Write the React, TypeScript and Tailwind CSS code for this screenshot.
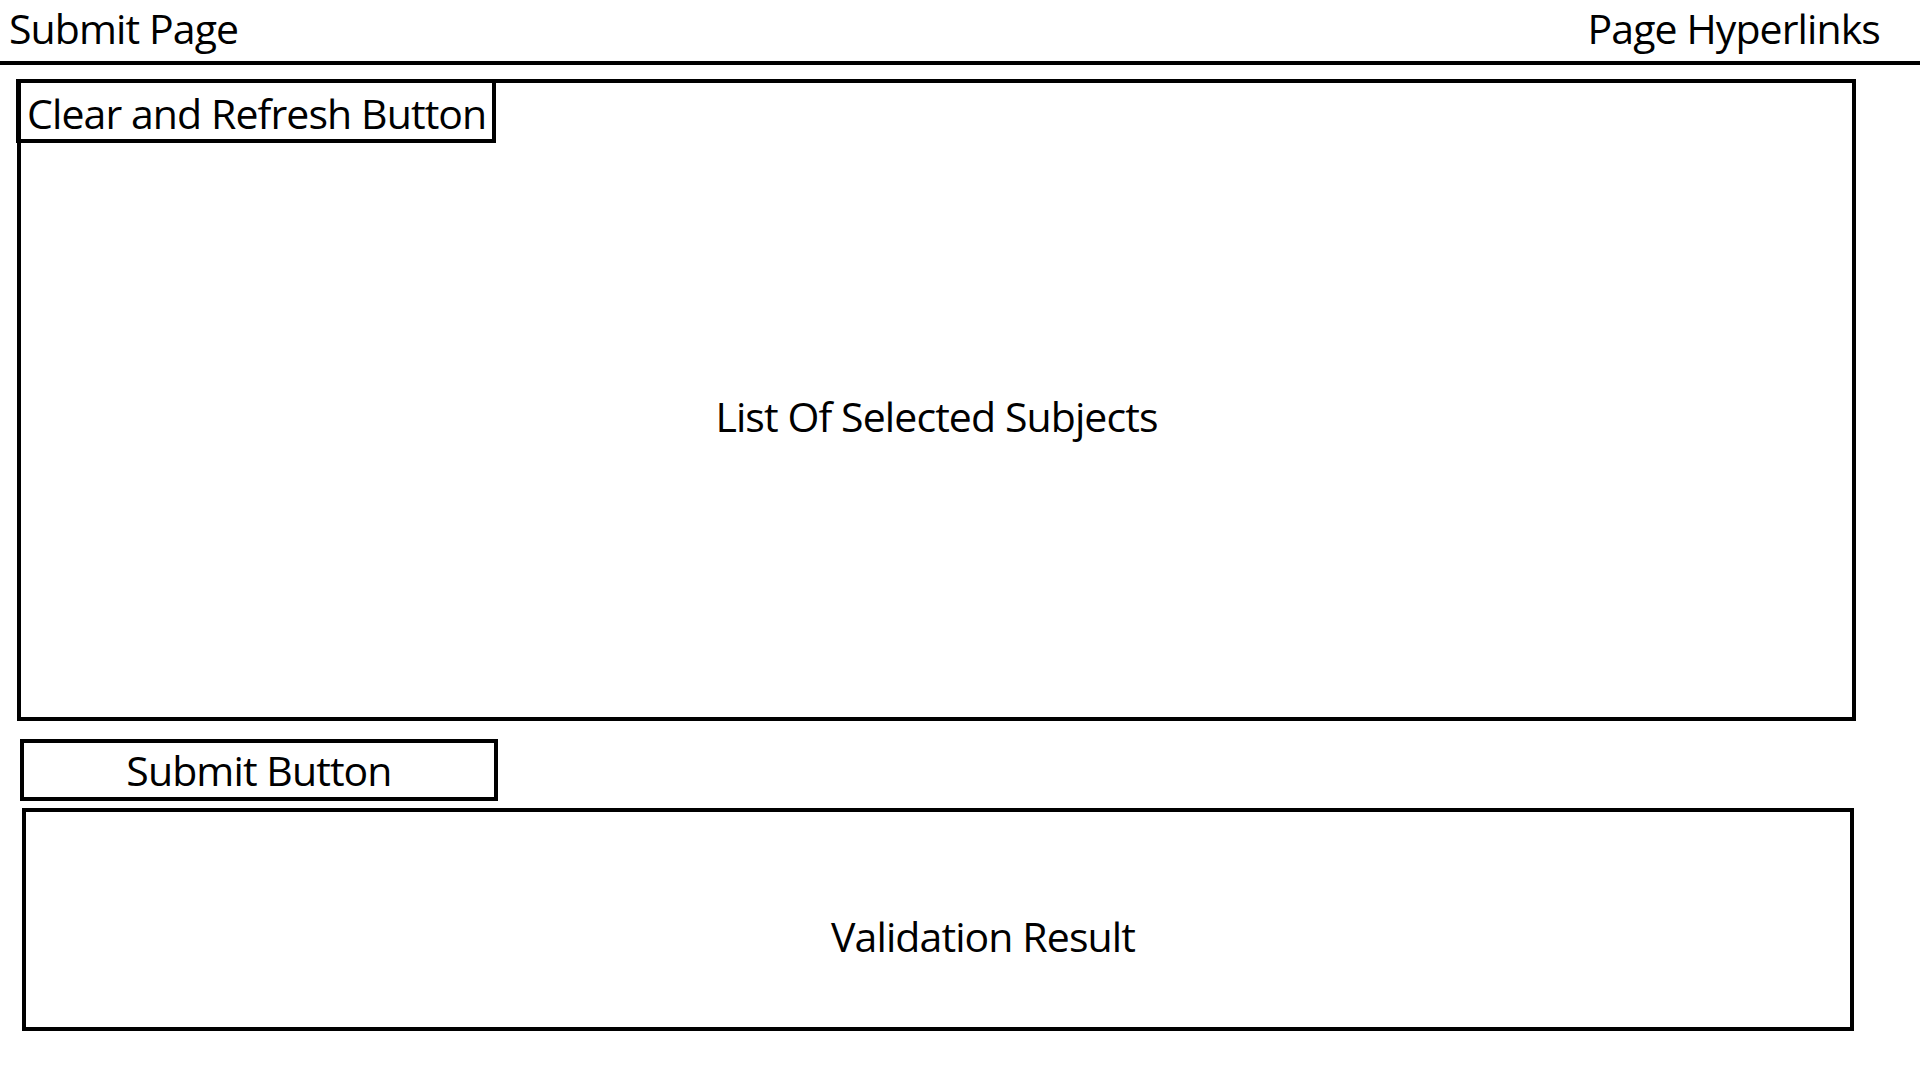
export default function App() {
  return (
    <div className="w-[1920px] h-[1080px] bg-white text-black overflow-hidden font-['Open_Sans',_'Noto_Sans',_sans-serif] text-[41px] leading-[56px] tracking-[-0.9px]">
      {/* top bar */}
      <div className="h-[65px] border-b-4 border-black flex justify-between pl-[9px] pr-[40px]">
        <span>Submit Page</span>
        <span>Page Hyperlinks</span>
      </div>

      {/* selected subjects */}
      <div className="ml-[17px] mt-[14px] w-[1839px] h-[642px] border-4 border-black flex flex-col">
        <div className="-ml-[5px] -mt-[4px] w-[480px] h-[64px] border-4 border-black pl-[7px] leading-[60px] whitespace-nowrap">
          Clear and Refresh Button
        </div>
        <div className="flex-1 pt-[245px] text-center">List Of Selected Subjects</div>
      </div>

      <button className="block ml-[20px] mt-[18px] w-[478px] h-[62px] border-4 border-black text-center leading-[54px]">
        Submit Button
      </button>

      <div className="ml-[22px] mt-[7px] w-[1832px] h-[223px] border-4 border-black pt-[96px] pl-[90px] text-center">
        Validation Result
      </div>
    </div>
  );
}
